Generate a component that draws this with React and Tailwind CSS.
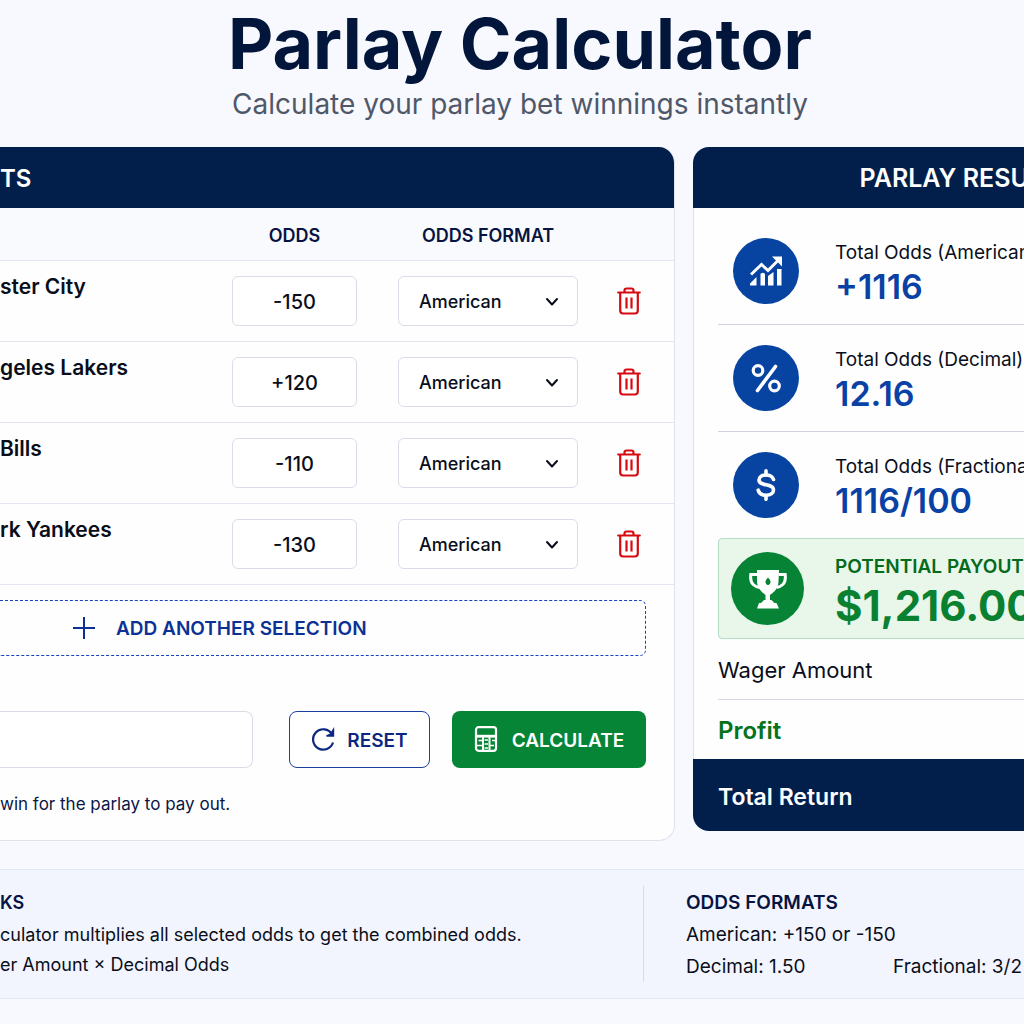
import React, { useState } from "react";

const PICKS = [
  { name: "ster City", odds: "-150" },
  { name: "geles Lakers", odds: "+120" },
  { name: "Bills", odds: "-110" },
  { name: "rk Yankees", odds: "-130" },
];

function TrashIcon() {
  return (
    <svg className="h-7 w-6" viewBox="0 0 24 28" fill="none" stroke="currentColor" strokeWidth="2.2" strokeLinejoin="round" aria-hidden="true">
      <path d="M1.2 5.500h21.600" strokeLinecap="round" />
      <path d="M7.500 5V3.500Q7.500 1.500 9.500 1.500h5q2 0 2 2V5" />
      <path d="M3.200 6v17.500q0 3 3 3h11.600q3 0 3-3V6" />
      <path d="M9.500 10.500v11M14.500 10.500v11" />
    </svg>
  );
}

function ChevronIcon() {
  return (
    <svg className="pointer-events-none absolute top-1/2 right-[18px] h-4 w-4 -translate-y-1/2" viewBox="0 0 16 16" fill="none" stroke="currentColor" strokeWidth="2" strokeLinecap="round" strokeLinejoin="round" aria-hidden="true">
      <path d="M3 6l5 5.500L13 6" />
    </svg>
  );
}

function PlusIcon() {
  return (
    <svg className="h-6 w-6" viewBox="0 0 24 24" fill="none" stroke="currentColor" strokeWidth="2" aria-hidden="true">
      <path d="M12 1v22M1 12h22" />
    </svg>
  );
}

function ResetIcon() {
  return (
    <svg className="h-6 w-6" viewBox="0 0 24 24" fill="none" stroke="currentColor" strokeWidth="2.2" aria-hidden="true">
      <path d="M22 15.500A10.200 10.200 0 1 1 21 7.200" />
      <path d="M22.500 2.500V9h-7l4-1.800z" fill="currentColor" strokeWidth="1.400" />
    </svg>
  );
}

function CalculatorIcon() {
  return (
    <svg className="h-7 w-6" viewBox="0 0 24 28" fill="none" stroke="currentColor" strokeWidth="2.2" aria-hidden="true">
      <rect x="2" y="2.200" width="20" height="23.600" rx="2.500" />
      <path d="M2 11.200h20" strokeWidth="2.800" />
      <path d="M9 12v13M15.500 12v13" strokeWidth="2" />
      <path d="M4.500 15.500h3.500M10.500 15h3.500M18 15.500h3M3 20.500h5.500M10.500 19h3.500M16 20.500h4M10.500 23h3.500" strokeWidth="1.500" />
    </svg>
  );
}

function ChartIcon() {
  return (
    <svg className="h-8 w-8" viewBox="0 0 32 32" fill="none" stroke="currentColor" aria-hidden="true">
      <path d="M1 19.500L11.500 9.500 18 15.500 29 4.500" strokeWidth="3" />
      <path d="M22 1.500h10v10l-3.200-3.200-3.600-3.600z" fill="currentColor" stroke="none" />
      <path d="M0 30.500v-2l6.500-6.500v8.500z M10.500 19q2.300-2.500 4.500 0v11.500h-4.500z M18 21l5.500-4v13.500H18z M27 14h4.500v16.500H27z" fill="currentColor" stroke="none" />
    </svg>
  );
}

function PercentIcon() {
  return (
    <svg className="h-8 w-8" viewBox="0 0 32 32" fill="none" stroke="currentColor" strokeWidth="3.2" strokeLinecap="round" aria-hidden="true">
      <circle cx="8" cy="8.500" r="4.800" />
      <circle cx="24.500" cy="24" r="4.800" />
      <path d="M25.500 4.500L7.500 28.500" strokeWidth="3.600" />
    </svg>
  );
}

function DollarIcon() {
  return (
    <svg className="h-8 w-8" viewBox="0 0 32 32" fill="none" stroke="currentColor" strokeWidth="3.6" strokeLinecap="round" aria-hidden="true">
      <path d="M23.500 10.500C22.500 7.500 19.800 6 16 6c-4.200 0-7 2-7 5 0 7 14.500 2.500 14.500 10 0 3.200-3 5.200-7.500 5.200-4.400 0-7-1.900-7.800-5" />
      <path d="M16 1.900V6M16 26.500v3.800" />
    </svg>
  );
}

function TrophyIcon() {
  return (
    <svg className="h-10 w-10" viewBox="0 0 40 40" fill="none" stroke="currentColor" aria-hidden="true">
      <path fillRule="evenodd" d="M9 1h22l-.5 12c-.5 6-4 10-8.500 13v5h1.500l3 3h2L31 39.500H9l2-5.500h2l3-3h1.500v-5C13.500 23 9.500 19 9 13zM20 8.500c-1 1.500-2.500 2.500-2.500 4.300S18.500 16 20 16s2.500-1.400 2.500-3.200S21 10 20 8.500z" fill="currentColor" stroke="none" />
      <path d="M9.500 5.500H2.800Q2 12.500 5.200 15.500q2.500 2.300 6.300 3M30.500 5.500h6.700q.8 7-2.400 10-2.500 2.300-6.300 3" strokeWidth="3" />
    </svg>
  );
}

const RESULTS = [
  { label: "Total Odds (American)", value: "+1116", Icon: ChartIcon },
  { label: "Total Odds (Decimal)", value: "12.16", Icon: PercentIcon },
  { label: "Total Odds (Fractional)", value: "1116/100", Icon: DollarIcon },
];

function PickRow({ pick, onOdds, onRemove }) {
  return (
    <tr className="h-[81px] border-b border-[#e4e7ef]">
      <th scope="row" className="pt-2.5 text-left align-top text-[21px] leading-8 font-semibold whitespace-nowrap text-[#0a0e1a]">{pick.name}</th>
      <td className="px-2 text-center">
        <input
          type="text"
          aria-label={"Odds for " + pick.name}
          value={pick.odds}
          onChange={(e) => onOdds(e.target.value)}
          className="h-[50px] w-[125px] rounded-md border border-[#dadde8] bg-white pt-0.5 text-center text-xl font-medium text-[#0a0e1a]"
        />
      </td>
      <td>
        <div className="relative mx-auto w-[180px]">
          <select aria-label={"Odds format for " + pick.name} className="h-[50px] w-full appearance-none rounded-md border border-[#dadde8] bg-white pt-0.5 pl-5 text-lg font-medium text-[#0a0e1a]">
            <option>American</option>
            <option>Decimal</option>
            <option>Fractional</option>
          </select>
          <ChevronIcon />
        </div>
      </td>
      <td className="pr-4 text-center">
        <button type="button" aria-label={"Remove " + pick.name} onClick={onRemove} className="inline-flex align-middle text-[#d60b12]">
          <TrashIcon />
        </button>
      </td>
    </tr>
  );
}

export default function App() {
  const [picks, setPicks] = useState(PICKS);
  const [wager, setWager] = useState("");

  return (
    <div className="min-h-screen overflow-hidden bg-[#f8f9fe] font-['Inter','Liberation_Sans',sans-serif] text-[#0a0e1a]">
      <header className="pt-2 pl-4 text-center">
        <h1 className="text-[70px] leading-[72px] font-bold text-[#02163b]">Parlay Calculator</h1>
        <p className="mt-2 text-[28px] leading-8 text-[#4f5869]">Calculate your parlay bet winnings instantly</p>
      </header>

      <main className="mt-[27px] grid grid-cols-[675px_1fr] items-start gap-[18px]">
        <section className="overflow-hidden rounded-r-2xl border-r border-b border-[#dfe2ec] bg-[#fefefe]">
          <h2 className="flex h-[61px] items-center bg-[#021f4c] pt-0.5 text-2xl font-semibold text-white">TS</h2>
          <table className="w-full table-fixed border-collapse">
            <colgroup>
              <col className="w-[212px]" />
              <col className="w-[165px]" />
              <col className="w-[222px]" />
              <col />
            </colgroup>
            <thead>
              <tr className="h-[52px] border-b border-[#e4e7ef] bg-[#f9fafe] text-lg font-semibold text-[#071441]">
                <td />
                <th scope="col" className="pt-1 font-semibold">ODDS</th>
                <th scope="col" className="pt-1 font-semibold">ODDS FORMAT</th>
                <td />
              </tr>
            </thead>
            <tbody>
              {picks.map((pick, i) => (
                <PickRow
                  key={pick.name}
                  pick={pick}
                  onOdds={(odds) => setPicks(picks.map((p, j) => (j === i ? { ...p, odds } : p)))}
                  onRemove={() => setPicks(picks.filter((_, j) => j !== i))}
                />
              ))}
            </tbody>
          </table>
          <div className="pt-[15px] pr-7 pb-6">
            <button type="button" className="flex h-[56px] w-full items-center gap-5 rounded-r-md border border-l-0 border-dashed border-[#1244c0] pl-[72px] text-[19px] font-semibold text-[#0b3195]">
              <PlusIcon />
              <span className="pt-1">ADD ANOTHER SELECTION</span>
            </button>
            <div className="mt-[55px] flex items-center">
              <input
                type="text"
                aria-label="Wager amount"
                value={wager}
                onChange={(e) => setWager(e.target.value)}
                className="h-[57px] min-w-0 flex-1 rounded-r-lg border border-l-0 border-[#dadde8] bg-white px-4 text-xl"
              />
              <button type="button" onClick={() => setWager("")} className="ml-9 flex h-[57px] w-[141px] items-center justify-center gap-3 rounded-lg border border-[#1c3f9e] bg-white text-[19px] font-semibold text-[#0b2780]">
                <ResetIcon />
                <span className="pt-1">RESET</span>
              </button>
              <button type="button" className="ml-[22px] flex h-[57px] w-[194px] items-center justify-center gap-3.5 rounded-lg bg-[#058535] text-[19px] font-semibold text-white">
                <CalculatorIcon />
                <span className="pt-1">CALCULATE</span>
              </button>
            </div>
            <p className="mt-6 text-[17px] leading-6 text-[#0b1645]">win for the parlay to pay out.</p>
          </div>
        </section>

        <section className="-mr-[216px] overflow-hidden rounded-2xl">
          <h2 className="flex h-[61px] items-center justify-center bg-[#021f4c] pt-0.5 text-[25px] font-semibold whitespace-nowrap text-white">PARLAY RESULTS</h2>
          <div className="border-l border-[#dfe2ec] bg-[#fefefe] px-6 pt-2.5">
            {RESULTS.map(({ label, value, Icon }, i) => (
              <div key={label} className={i < 2 ? "flex h-[107px] items-center border-b border-[#cfd3e0] pl-[15px]" : "flex h-[106px] items-center pl-[15px]"}>
                <span className="flex size-[66px] shrink-0 items-center justify-center rounded-full bg-[#0744a2] text-white">
                  <Icon />
                </span>
                <dl className="ml-9 pt-2 whitespace-nowrap">
                  <dt className="text-[19px] leading-6">{label}</dt>
                  <dd className="text-[34px] leading-[44px] font-semibold text-[#0a41a4]">{value}</dd>
                </dl>
              </div>
            ))}
            <div className="flex h-[101px] items-center rounded-sm border border-[#b5dcc4] bg-[#e8f7ea] pl-3">
              <span className="flex size-[73px] shrink-0 items-center justify-center rounded-full bg-[#078336] text-white">
                <TrophyIcon />
              </span>
              <dl className="ml-[31px] pt-2.5 whitespace-nowrap">
                <dt className="text-[19px] leading-6 font-semibold text-[#046a1c]">POTENTIAL PAYOUT</dt>
                <dd className="text-[42px] leading-[54px] font-bold text-[#0a8031]">$1,216.00</dd>
              </dl>
            </div>
            <p className="flex h-[61px] items-center border-b border-[#d5d8e2] pt-0.5 text-[22px]">Wager Amount</p>
            <p className="flex h-[59px] items-center pt-0.5 text-2xl font-semibold text-[#06721a]">Profit</p>
          </div>
          <p className="flex h-[72px] items-center bg-[#021f4c] px-[25px] pt-1 text-[23px] font-semibold text-white">Total Return</p>
        </section>
      </main>

      <footer className="mt-7 grid h-[130px] grid-cols-[644px_1fr] items-center border-y border-[#dfe8f8] bg-[#f2f5fe] whitespace-nowrap">
        <section className="h-24 border-r border-[#d6dcea] pt-px text-lg">
          <h3 className="leading-8 font-semibold text-[#071441]">KS</h3>
          <p className="leading-8">culator multiplies all selected odds to get the combined odds.</p>
          <p className="leading-7">er Amount × Decimal Odds</p>
        </section>
        <section className="h-24 pt-px pl-[42px] text-[19px]">
          <h3 className="leading-8 font-semibold text-[#071441]">ODDS FORMATS</h3>
          <p className="leading-8">American: +150 or -150</p>
          <div className="flex leading-8">
            <p className="w-[207px]">Decimal: 1.50</p>
            <p>Fractional: 3/2</p>
          </div>
        </section>
      </footer>
    </div>
  );
}
